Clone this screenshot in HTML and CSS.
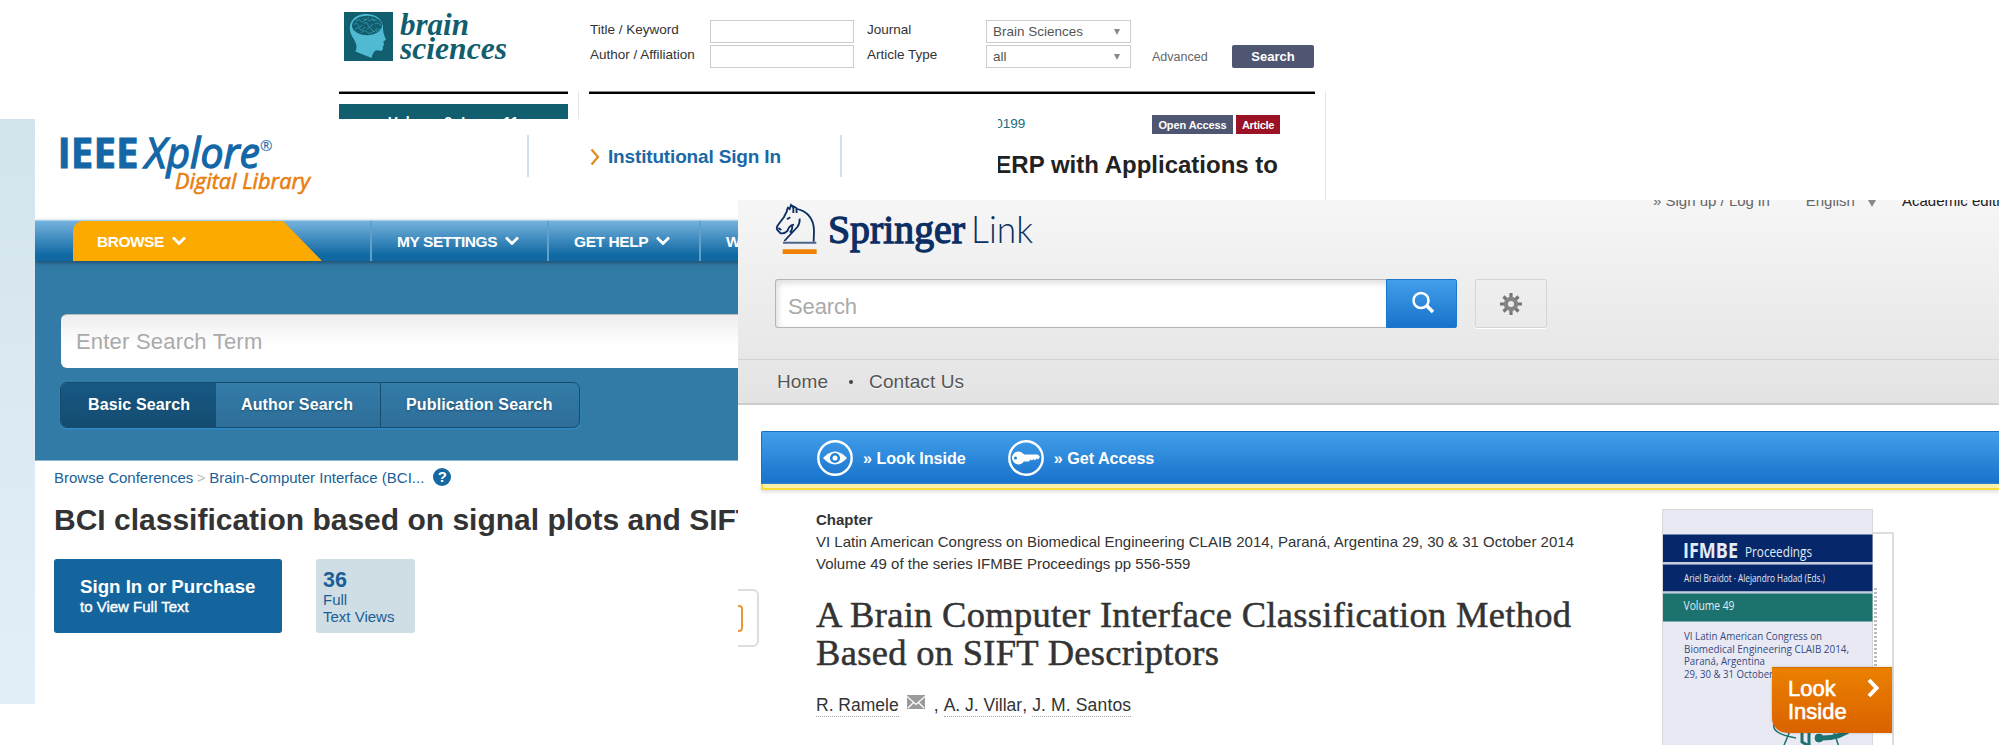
FILE: index.html
```html
<!DOCTYPE html>
<html lang="en">
<head>
<meta charset="utf-8">
<title>Publications</title>
<link rel="stylesheet" href="styles.css">
</head>
<body>
<section class="brain">
  <div class="brain-side">
    <div class="brain-logo">
      <svg width="49" height="49" viewBox="0 0 49 49"><rect width="49" height="49" fill="#115e6f"/><path d="M11.500 39.500C14 34 11.500 30 8.500 25C5.500 20 4.500 13 8.500 8C13 2.500 19 1.800 25 2.200C33 3 38.500 8 39 15C39 19 39.500 22 42 27.500L39.500 29.500L40 33L38.800 34.500C39.500 38 38 39.500 34.500 38.500C30.500 37.500 29 41 27.500 46Z" fill="#4fbad1"/><ellipse cx="23" cy="13.500" rx="15" ry="9.700" fill="#115e6f"/><g fill="none" stroke="#4fbad1" stroke-width=".55"><path d="M10 13q2-4 4 0t4 0M12 9q3-3 5 0t5-2M19 6q3 4 6-1M24 9q4-3 7 0M28 6q2 3 5 2M20 12q3-3 4 1t5-1M31 12q3-3 6 2M11 17q3-3 5 0t5-2M23 17q3-3 5 1t5-2M17 21q3-4 6-1t7-1M32 20q2-3 5-3"/></g></svg>
      <svg class="grow" width="112" height="54" viewBox="0 0 112 54" fill="#115e6f" font-family="Liberation Serif,serif" font-weight="bold" font-style="italic" font-size="31"><text x="0" y="25" textLength="69" lengthAdjust="spacingAndGlyphs">brain</text><text x="0" y="48.500" textLength="107" lengthAdjust="spacingAndGlyphs">sciences</text></svg>
    </div>
    <div class="rule"></div>
    <div class="volume">Volume 8, Issue 11</div>
  </div>
  <div class="brain-main">
    <form class="finder">
      <label>Title / Keyword</label><i class="field"></i>
      <label class="second">Journal</label><div class="select"><span>Brain Sciences</span><b></b></div><i></i><i></i>
      <label>Author / Affiliation</label><i class="field"></i>
      <label class="second">Article Type</label><div class="select"><span>all</span><b></b></div>
      <a class="advanced">Advanced</a><div class="find">Search</div>
    </form>
    <div class="paper">
      <div class="rule"></div>
      <div class="cite"><span>Brain Sci. 2018, 8(11), 199; <a>https://doi.org/10.3390/brainsci8110199</a></span><span class="badge oa">Open Access</span><span class="badge art">Article</span></div>
      <h2>ERP with Applications to</h2>
    </div>
  </div>
</section>

<section class="ieee">
  <div class="strip"></div>
  <div class="ieee-body">
    <header>
      <svg class="xplore" width="260" height="68" viewBox="60 130 260 68" font-family="Open Sans,sans-serif"><g fill="#1467a7" stroke="#1467a7"><text x="57.500" y="168" font-size="42" font-weight="bold" stroke-width=".8" textLength="81" lengthAdjust="spacingAndGlyphs">IEEE</text><text x="145" y="168" font-size="42" font-style="italic" stroke-width="1.300" textLength="115" lengthAdjust="spacingAndGlyphs">Xplore</text><text x="260" y="151" font-size="15" stroke="none">®</text></g><text x="175" y="189" font-size="21.500" font-style="italic" fill="#e87f10" stroke="#e87f10" stroke-width=".6" textLength="135" lengthAdjust="spacingAndGlyphs">Digital Library</text></svg>
      <div class="institution"><svg width="10" height="18" viewBox="0 0 10 18"><path d="M1.500 1.500L8 9L1.500 16.500" fill="none" stroke="#e08a1c" stroke-width="2.200"/></svg><span>Institutional Sign In</span></div>
    </header>
    <nav>
      <a class="browse"><span>BROWSE</span><svg width="14" height="9" viewBox="0 0 14 9"><path d="M1 1.500L7 7.500L13 1.500"/></svg></a>
      <a class="settings"><span>MY SETTINGS</span><svg width="14" height="9" viewBox="0 0 14 9"><path d="M1 1.500L7 7.500L13 1.500"/></svg></a>
      <a class="help"><span>GET HELP</span><svg width="14" height="9" viewBox="0 0 14 9"><path d="M1 1.500L7 7.500L13 1.500"/></svg></a>
      <a class="access"><span>WHAT</span></a>
    </nav>
    <div class="panel">
      <div class="term">Enter Search Term</div>
      <div class="tabs"><a class="on">Basic Search</a><a class="author">Author Search</a><a class="pub">Publication Search</a></div>
    </div>
    <div class="crumbs"><span>Browse Conferences</span><i>&gt;</i><span>Brain-Computer Interface (BCI...</span><b>?</b></div>
    <h1>BCI classification based on signal plots and SIFT</h1>
    <div class="actions">
      <a class="purchase"><strong>Sign In or Purchase</strong><em>to View Full Text</em></a>
      <div class="views"><strong>36</strong><span>Full</span><span>Text Views</span></div>
    </div>
  </div>
</section>

<section class="springer">
  <header>
    <div class="top">
      <svg class="horse" width="44" height="53" viewBox="130 38 132 159" fill="none" stroke="#0b2f63" stroke-width="5.500"><path d="M170 60L160 80L142 104Q136 112 140 119L150 129Q160 131 170 122Q174 110 182 105L190 103M168 61L172 52L177 56L181 44L188 51L188 68M184 46L197 53L198 68M195 55Q248 66 250 120L249 154M207 85Q208 100 200 110L161 152M182 105Q189 112 178 127M169 87L179 81M143 113L152 119"/><path d="M157 157H257" stroke="#4b6389" stroke-width="6"/><path d="M156 184H258" stroke="#f08200" stroke-width="14"/></svg>
      <svg class="wordmark" width="210" height="50" viewBox="825 205 210 50" fill="#0b2f63"><text x="828" y="243" font-family="Liberation Serif,serif" font-size="41" stroke="#0b2f63" stroke-width="1.300" textLength="137" lengthAdjust="spacingAndGlyphs">Springer</text><text x="971" y="243" font-family="Lato,sans-serif" font-weight="300" font-size="36.500" textLength="62" lengthAdjust="spacingAndGlyphs">Link</text></svg>
      <div class="util"><span>» Sign up / Log in</span><span class="lang">English</span><b></b><span class="edition">Academic edition</span></div>
    </div>
    <div class="searchbar">
      <div class="query">Search</div>
      <div class="go"><svg width="26" height="26" viewBox="0 0 26 26" fill="none" stroke="#fff"><circle cx="11" cy="10.500" r="7.500" stroke-width="2.500"/><path d="M16.500 15.500L23 22" stroke-width="3.500"/></svg></div>
      <div class="gear"><svg width="24" height="24" viewBox="-12 -12 24 24"><g stroke="#777" stroke-width="3.200"><path d="M0-11V11M-11 0H11M-7.500-7.500L7.500 7.500M-7.500 7.500L7.500-7.500"/></g><circle r="7.200" fill="#858585"/><circle r="3" fill="#ececec"/></svg></div>
    </div>
    <div class="menu"><span>Home</span><i></i><span>Contact Us</span></div>
  </header>
  <div class="feedback"><i></i></div>
  <div class="toolbar">
    <svg width="36" height="36" viewBox="0 0 36 36"><circle cx="18" cy="18" r="16.700" fill="none" stroke="#fff" stroke-width="2.400"/><path d="M6 18Q18 5 30 18Q18 31 6 18Z" fill="#fff"/><circle cx="18" cy="18" r="3.800" fill="none" stroke="#2486d8" stroke-width="2.600"/></svg><span class="look">» Look Inside</span>
    <svg width="36" height="36" viewBox="0 0 36 36"><circle cx="18" cy="18" r="16.700" fill="none" stroke="#fff" stroke-width="2.400"/><circle cx="10.500" cy="18" r="6.500" fill="#fff"/><circle cx="7.500" cy="18" r="1.600" fill="#2486d8"/><path d="M15 14.500H30L32 17L30 19.500L28.500 18.500L27 20.500L25.500 19L24 20.500L22.500 19.500L21 21.500H15Z" fill="#fff"/></svg><span class="get">» Get Access</span>
  </div>
  <div class="yellow"></div>
  <div class="content">
    <article>
      <p class="kind">Chapter</p>
      <p>VI Latin American Congress on Biomedical Engineering CLAIB 2014, Paraná, Argentina 29, 30 &amp; 31 October 2014</p>
      <p>Volume 49 of the series IFMBE Proceedings pp 556-559</p>
      <h1>A Brain Computer Interface Classification Method<br>Based on SIFT Descriptors</h1>
      <div class="authors"><u>R. Ramele</u><svg width="18" height="14" viewBox="0 0 18 14"><path fill="#9b9b9b" d="M0 0H18V14H0Z"/><path d="M0 1.500L9 9.500L18 1.500M1 13L6.500 7.500M17 13L11.500 7.500" fill="none" stroke="#fff" stroke-width="1.300"/></svg><s>,</s><u>A. J. Villar</u><s>,</s><u class="third">J. M. Santos</u></div>
    </article>
    <aside>
      <svg class="cover" width="211" height="236" viewBox="1662 509 211 236" font-family="Open Sans,sans-serif">
        <rect x="1662.500" y="509.500" width="210" height="240" fill="#e9e9f4" stroke="#d8d8d8"/>
        <path fill="#06286b" d="M1663 534.500h209.500v27.500h-209.500zM1663 564.500h209.500v27h-209.500z"/><path fill="#c4cce0" d="M1663 562h209.500v2h-209.500zM1663 591.500h209.500v2h-209.500z"/><path fill="#1b726e" d="M1663 593.500h209.500v28h-209.500z"/>
        <g lengthAdjust="spacingAndGlyphs" fill="#e3ebf6">
          <text x="1683" y="557.500" font-size="22" font-weight="bold" textLength="55" lengthAdjust="spacingAndGlyphs">IFMBE</text>
          <text x="1745" y="557" font-size="15" textLength="67" lengthAdjust="spacingAndGlyphs">Proceedings</text>
          <text x="1684" y="582" font-size="10.500" textLength="141" lengthAdjust="spacingAndGlyphs">Ariel Braidot · Alejandro Hadad (Eds.)</text>
          <text x="1683.500" y="610" font-size="12.500" textLength="51" lengthAdjust="spacingAndGlyphs">Volume 49</text>
        </g>
        <g fill="#35497f" font-size="11.500">
          <text x="1684" y="639.500" textLength="138" lengthAdjust="spacingAndGlyphs">VI Latin American Congress on</text>
          <text x="1684" y="652.500" textLength="165" lengthAdjust="spacingAndGlyphs">Biomedical Engineering CLAIB 2014,</text>
          <text x="1684" y="665" textLength="81" lengthAdjust="spacingAndGlyphs">Paraná, Argentina</text>
          <text x="1684" y="677.500" textLength="89" lengthAdjust="spacingAndGlyphs">29, 30 &amp; 31 October</text>
        </g>
        <g fill="none" stroke="#1b726e" transform="translate(1768 714)"><path d="M12 3Q-6 18 28 24" stroke-width="1.500"/><path d="M22 17L14 36M66 18L72 36" stroke-width="1.500"/><path d="M34 16V28L41 32V16" stroke-width="3"/><path d="M51 24Q72 25 84 14" stroke-width="5"/><circle cx="51" cy="24" r="4" fill="#1b726e"/></g>
      </svg>
      <div class="page"><i></i></div>
      <div class="peek"><span>Look<br>Inside</span><svg width="14" height="20" viewBox="0 0 14 20"><path d="M3 2L10.500 10L3 18" fill="none" stroke="#fff" stroke-width="4"/></svg></div>
    </aside>
  </div>
</section>
</body>
</html>
```
FILE: styles.css
```css
* { box-sizing: border-box; }
body { margin: 0; width: 1999px; height: 745px; overflow: hidden; background: #fff; position: relative; font-family: "Liberation Sans", Arial, sans-serif; color: #333; }
h1, h2, p { margin: 0; }
i, em, u, s { font-style: normal; text-decoration: none; }
span, p { white-space: nowrap; }
svg { display: block; flex: none; }

/* Brain Sciences window */
.brain { position: absolute; left: 0; top: 0; width: 1326px; height: 200px; padding-left: 339px; display: grid; grid-template-columns: 229px 748px; column-gap: 10px; overflow: hidden; }
.brain-logo { height: 91px; padding: 12px 0 0 5px; display: flex; gap: 7px; }
.brain-logo .grow { margin-top: -2px; }
.rule { height: 3px; background: #000; border-top: 1px solid #888; }
.volume { margin-top: 10px; height: 30px; background: #115e6f; color: #fff; font-weight: bold; font-size: 14px; line-height: 37px; letter-spacing: .4px; text-align: center; }
.finder { height: 91px; padding: 20px 0 0 11px; display: grid; grid-template-columns: 121px 144px 132px 145px 101px 82px; grid-template-rows: 23px 23px; row-gap: 2px; font-size: 13.5px; }
.finder label { line-height: 20px; padding-left: 1px; }
.finder label.second { padding-left: 13px; }
.field { border: 1px solid #ccc; }
.select { border: 1px solid #ccc; padding: 0 10px 0 6px; line-height: 21px; display: flex; justify-content: space-between; align-items: center; color: #555; }
.select b { border: 3.500px solid transparent; border-top: 6px solid #888; border-bottom: 0; }
.advanced { padding-left: 21px; font-size: 12.500px; line-height: 25px; color: #666; }
.find { background: #4f5671; border-radius: 2px; color: #fff; font-weight: bold; font-size: 13px; text-align: center; line-height: 24px; }
.paper { height: 109px; border: solid #e4e4e4; border-width: 0 1px; padding: 0 10px; }
.cite { margin: 21px 35px 0 33px; display: flex; height: 19px; font-size: 13.500px; line-height: 18px; color: #777; }
.cite a { color: #1c6a7c; }
.badge { color: #fff; font-weight: bold; font-size: 11px; line-height: 20px; text-align: center; }
.oa { margin-left: auto; width: 81px; background: #4f5671; letter-spacing: -.1px; }
.art { margin-left: 3px; width: 44px; background: #9b1224; letter-spacing: -.3px; }
.paper h2 { margin: 15px 37px 0 0; text-align: right; font-size: 24px; line-height: 32px; color: #222; }

/* IEEE Xplore window */
.ieee { position: absolute; left: 0; top: 119px; width: 998px; height: 585px; display: grid; grid-template-columns: 35px 963px; overflow: hidden; background: #fff; }
.strip { background: linear-gradient(#d3e4ed, #e3eff8); }
.ieee-body { overflow: hidden; }
.ieee header { height: 101px; padding: 11px 0 0 25px; display: flex; }
.institution { margin: 5px 0 0 207px; width: 315px; height: 42px; border: solid #cfe2ee; border-width: 0 2px; padding: 5px 0 0 61px; display: flex; align-items: flex-start; gap: 8px; color: #1a68a5; font-weight: bold; font-size: 19px; letter-spacing: -.16px; line-height: 34px; }
.institution svg { margin-top: 8px; }
.ieee nav { height: 41px; border-top: 1px solid #a9d0ea; background: linear-gradient(#74b2dd, #1169a3 85%); display: flex; padding-left: 38px; color: #fff; font-weight: bold; font-size: 15.500px; letter-spacing: -.42px; position: relative; box-shadow: 0 2px 4px #1d4f70; }
.ieee nav a { display: flex; align-items: center; gap: 8px; }
.ieee nav a span { height: 40px; line-height: 41px; }
.ieee nav svg { fill: none; stroke: #fff; stroke-width: 2.800; margin-top: -1px; }
.browse { width: 249px; padding-left: 24px; background: #fca900; border-radius: 10px 0 0; clip-path: polygon(0 0, 210px 0, 249px 100%, 0 100%); margin-right: 48px; }
.browse span { letter-spacing: -.5px; }
.settings, .help, .access { border-left: 2px solid #5f9fc8; padding-left: 25px; }
.settings { width: 177px; }
.help { width: 152px; }
.panel { height: 200px; background: #337ba7; border-bottom: 1px solid #8bb5d0; padding: 53px 0 0 26px; }
.term { height: 54px; border-radius: 6px 0 0 6px; background: linear-gradient(#eee, #fff 60%); border-top: 1px solid #bbb; padding-left: 15px; font-size: 22px; letter-spacing: .2px; line-height: 54px; color: #aaa; }
.tabs { margin: 14px 0 0 -1px; width: 520px; height: 46px; border: 1px solid #164c6d; border-radius: 7px; display: flex; overflow: hidden; background: linear-gradient(#347ca9, #2e6e99); color: #fff; font-weight: bold; font-size: 16px; letter-spacing: .14px; line-height: 43px; text-shadow: 0 1px 2px #1d4f70; box-shadow: 0 1px 2px #2f90d4; }
.tabs .on { width: 155px; padding-left: 27px; background: linear-gradient(#175883, #144c70); }
.author { width: 165px; padding-left: 25px; border-right: 1px solid #164c6d; }
.pub { padding-left: 25px; }
.crumbs { height: 33px; padding: 0 0 0 19px; display: flex; font-size: 15px; line-height: 33px; color: #1a5f97; }
.crumbs i { width: 16px; text-align: center; color: #bbb; }
.crumbs b { width: 18px; height: 18px; border-radius: 50%; background: #1568a0; color: #fff; margin: 7px 0 0 9px; font-size: 15px; line-height: 18px; text-align: center; }
.ieee h1 { padding-left: 19px; margin-top: 7px; font-size: 30px; line-height: 38px; color: #333; white-space: nowrap; }
.actions { margin-top: 20px; padding-left: 19px; display: flex; gap: 34px; }
.purchase { width: 228px; height: 74px; border-radius: 3px; background: #14659d; color: #fff; padding: 18px 0 0 26px; }
.purchase strong { display: block; font-size: 18.700px; line-height: 20px; }
.purchase em { display: block; font-size: 15px; line-height: 19px; -webkit-text-stroke: .4px #fff; }
.views { width: 99px; height: 74px; border-radius: 3px; background: #cfdde4; color: #1a5f97; padding: 10px 0 0 7px; font-size: 15px; line-height: 16.500px; }
.views > * { display: block; }
.views strong { font-size: 21.500px; line-height: 23px; height: 23px; }

/* SpringerLink window */
.springer { position: absolute; left: 738px; top: 200px; width: 1261px; height: 545px; overflow: hidden; background: #fff; }
.springer header { height: 205px; background: linear-gradient(#f6f6f6, #e3e3e3); border-bottom: 2px solid #ccc; }
.top { height: 79px; padding-left: 36px; display: flex; align-items: flex-start; }
.horse { margin-top: 3px; }
.wordmark { margin: 5px 0 0 7px; }
.util { margin: -9px 0 0 auto; width: 346px; display: flex; align-items: flex-start; font-size: 15px; line-height: 20px; color: #666; }
.lang { margin-left: 36px; }
.util b { margin: 9px 26px 0 13px; border: 4.500px solid transparent; border-top: 7px solid #888; border-bottom: 0; }
.edition { color: #222; }
.searchbar { height: 80px; padding-left: 37px; display: flex; }
.query { width: 612px; height: 49px; border: 1px solid #b5b5b5; border-right: 0; border-radius: 3px 0 0 3px; background: #fff; box-shadow: inset 2px 3px 6px #ddd; padding-left: 12px; font-size: 22px; letter-spacing: -.12px; line-height: 53px; color: #aaa; }
.go { width: 71px; height: 49px; border: 1px solid #1b76cc; border-radius: 0 2px 2px 0; background: linear-gradient(#439fea, #1772cb); margin-right: 18px; display: grid; place-items: center; margin-left: -1px; }
.go svg { margin: -2px 0 0 2px; }
.gear { width: 72px; height: 49px; border: 1px solid #d6d6d6; border-radius: 2px; box-shadow: 0 1px #fff; display: grid; place-items: center; }
.menu { height: 44px; border-top: 1px solid #d4d4d4; padding-left: 39px; display: flex; font-size: 19px; letter-spacing: .1px; line-height: 44px; color: #555; text-shadow: 0 1px 1px #fff; }
.menu i { width: 4px; height: 4px; border-radius: 50%; background: #444; margin: 20px 16px 0 21px; }
.feedback { position: absolute; left: -10px; top: 389px; width: 31px; height: 58px; border: 2px solid #ddd; border-radius: 6px; }
.feedback i { position: absolute; left: -2px; top: 14px; width: 15px; height: 27px; border: 2px solid #e8973a; border-radius: 4px; }
.toolbar { margin: 26px 0 0 23px; height: 53px; border: 1px solid #1d6fc3; border-right: 0; border-radius: 2px 0 0 0; background: linear-gradient(#439fea, #1772cb); display: flex; align-items: center; padding-left: 55px; color: #fff; font-weight: bold; font-size: 16.200px; letter-spacing: -.05px; }
.toolbar span { line-height: 50px; height: 50px; }
.look { margin: 0 42px 0 10px; }
.get { margin-left: 10px; }
.yellow { margin-left: 23px; height: 6px; background: #fdf0a8; border: solid #fbdc35; border-width: 0 0 2px 2px; box-shadow: 0 2px 4px #ddd; }
.content { padding-left: 78px; display: flex; }
article { width: 846px; padding-top: 19px; font-size: 15px; line-height: 22.500px; color: #333; }
.kind { font-weight: bold; line-height: 21.500px; }
article h1 { margin-top: 20px; font: 36.500px/38px "Liberation Serif", serif; letter-spacing: .3px; -webkit-text-stroke: .5px #333; }
.authors { margin-top: 21.500px; display: flex; font-size: 17.500px; line-height: 24px; height: 24px; }
.authors u { border-bottom: 1px dotted #aaa; }
.authors .third { letter-spacing: .15px; }
.authors svg { margin: 2px 9px 0 8px; }
.authors s { width: 10px; }
aside { position: relative; }
.cover { position: relative; z-index: 1; margin-top: 19px; }
.page { position: absolute; left: 205px; top: 42px; width: 27px; height: 220px; background: #fff; border: 2px solid #dedede; }
.page i { position: absolute; left: 5px; top: 54px; width: 3px; height: 78px; background: repeating-linear-gradient(#bbb 0 2px, #fff 2px 4px); }
.peek { position: absolute; z-index: 2; left: 110px; top: 177px; width: 120px; height: 66px; background: linear-gradient(#ea8000, #db6200); border-top: 1px solid #d27000; border-radius: 0 0 0 15px; box-shadow: 0 0 3px #0003; color: #fff; font-size: 22px; line-height: 23px; padding: 9px 12px 0 16px; display: flex; justify-content: space-between; align-items: flex-start; -webkit-text-stroke: .6px #fff; }
.peek svg { margin-top: 1px; }
```
